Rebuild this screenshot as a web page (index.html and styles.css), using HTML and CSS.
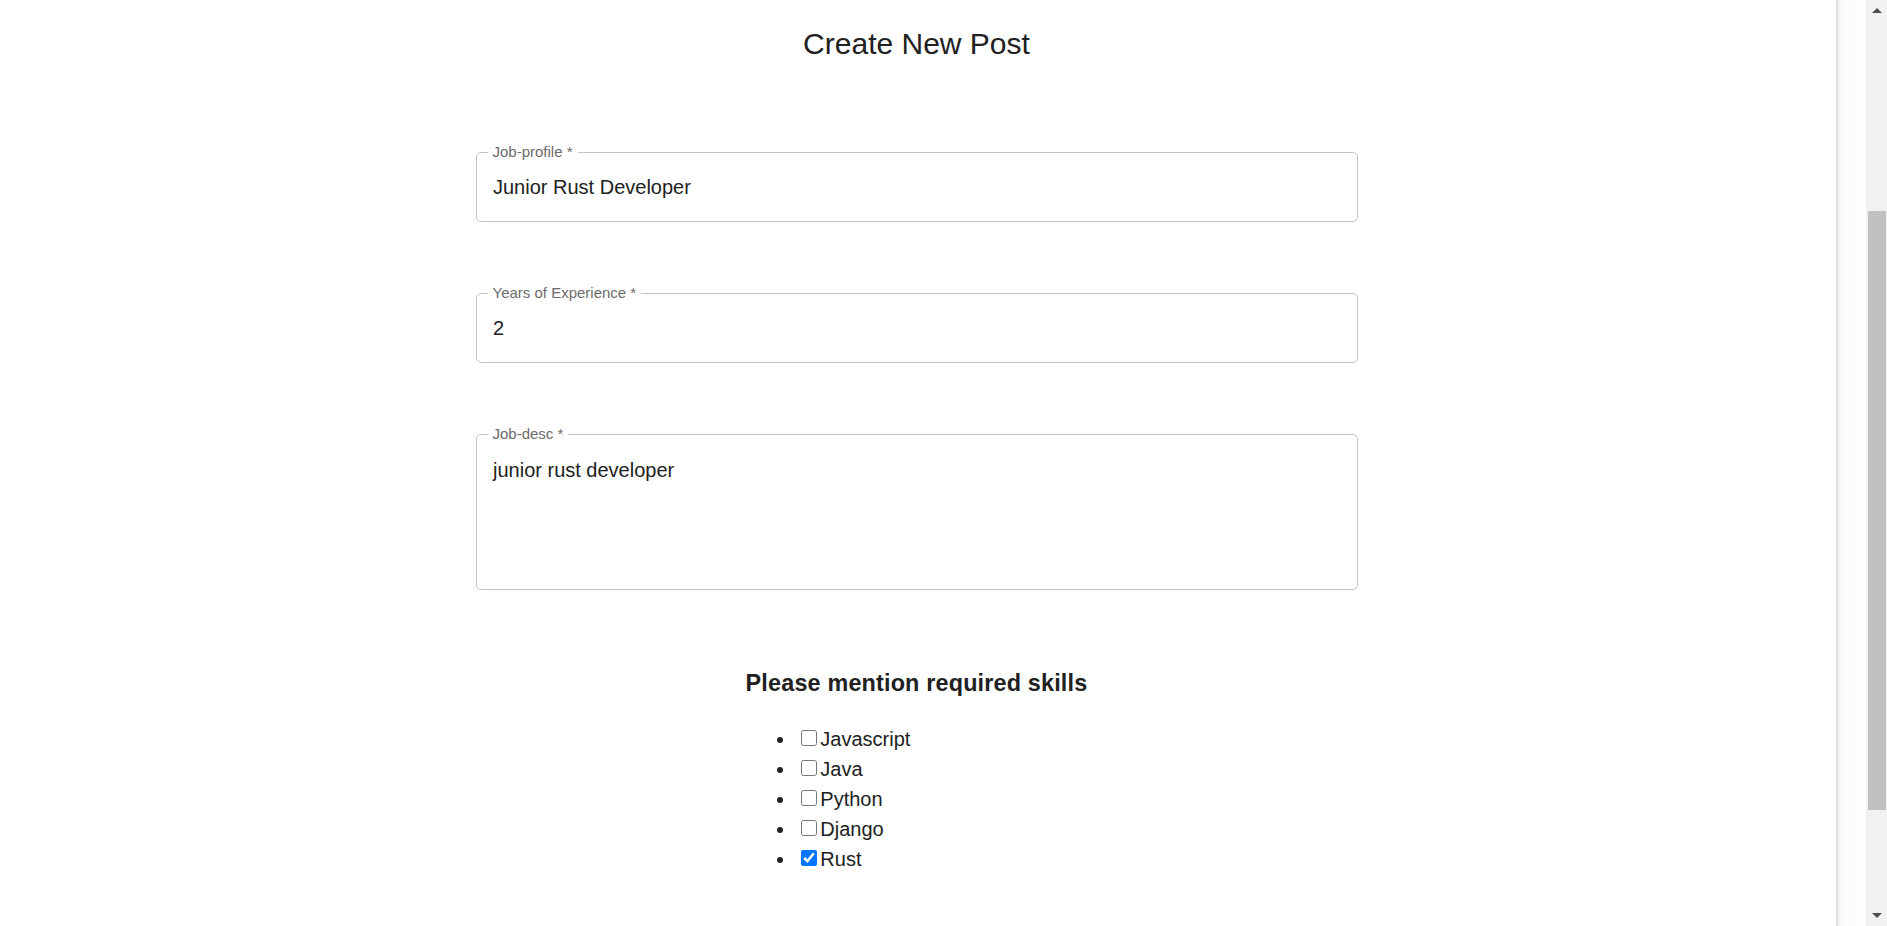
FILE: index.html
```html
<!DOCTYPE html>
<html lang="en">
<head>
<meta charset="utf-8">
<title>Create New Post</title>
<link rel="stylesheet" href="styles.css">
</head>
<body>
  <div class="page">
    <main class="main">
      <h5 class="title">Create New Post</h5>
      <form class="form">
        <div class="field">
          <label class="field-label">Job-profile *</label>
          <input class="field-input" type="text" value="Junior Rust Developer">
        </div>
        <div class="field">
          <label class="field-label">Years of Experience *</label>
          <input class="field-input" type="text" value="2">
        </div>
        <div class="field field-multi">
          <label class="field-label">Job-desc *</label>
          <textarea class="field-textarea" rows="4">junior rust developer</textarea>
        </div>
      </form>
      <section class="skills">
        <h3 class="skills-title">Please mention required skills</h3>
        <ul class="skills-list">
          <li><input class="check" type="checkbox">Javascript</li>
          <li><input class="check" type="checkbox">Java</li>
          <li><input class="check" type="checkbox">Python</li>
          <li><input class="check" type="checkbox">Django</li>
          <li><input class="check" type="checkbox" checked>Rust</li>
        </ul>
      </section>
    </main>
    <div class="side-strip"></div>
    <div class="scrollbar">
      <div class="sb-button"><span class="sb-arrow-up"></span></div>
      <div class="sb-track"><div class="sb-thumb"></div></div>
      <div class="sb-button"><span class="sb-arrow-down"></span></div>
    </div>
  </div>
</body>
</html>
```

FILE: styles.css
```css
html, body {
  margin: 0;
  padding: 0;
  background: #fff;
}

body {
  font-family: "Liberation Sans", Arial, sans-serif;
  font-size: 20px;
  line-height: 1.5;
  color: #212121;
}

.page {
  display: flex;
  height: 926px;
  overflow: hidden;
}

.main {
  flex: 1;
  display: flex;
  flex-direction: column;
  align-items: center;
  min-width: 0;
  padding-right: 3px;
}

.title {
  margin: 24px 0 0;
  font-size: 30px;
  line-height: 40px;
  font-weight: 400;
  color: #212121;
}

.form {
  width: 882px;
  margin-top: 88px;
  display: flex;
  flex-direction: column;
  gap: 71px;
}

.field {
  position: relative;
  height: 70px;
  box-sizing: border-box;
  border: 1px solid #c4c4c4;
  border-radius: 5px;
  display: flex;
}

.field-multi {
  height: 156px;
}

.field-label {
  position: absolute;
  top: -10px;
  left: 11px;
  padding: 0 5px;
  background: #fff;
  font-size: 15px;
  line-height: 18px;
  color: #6b6b6b;
  white-space: nowrap;
}

.field-input {
  flex: 1;
  border: none;
  outline: none;
  background: transparent;
  padding: 0 16.5px;
  margin: 0;
  height: 68px;
  font-family: inherit;
  font-size: 20px;
  color: #212121;
}

.field-textarea {
  flex: 1;
  border: none;
  outline: none;
  resize: none;
  background: transparent;
  margin: 0;
  padding: 20.6px 16.5px;
  font-family: inherit;
  font-size: 20px;
  line-height: 28.75px;
  color: #212121;
  overflow: hidden;
}

.skills {
  margin-top: 76px;
  display: flex;
  flex-direction: column;
}

.skills-title {
  margin: 0;
  font-size: 23.4px;
  line-height: 35px;
  font-weight: 700;
  letter-spacing: 0.17px;
  color: #212121;
}

.skills-list {
  margin: 23px 0 0;
  padding-left: 50px;
  list-style: disc;
  line-height: 30px;
}

.check {
  width: 16px;
  height: 16px;
  margin: 3.75px 3.75px 3.75px 5px;
  vertical-align: baseline;
}

.side-strip {
  width: 30px;
  flex: none;
  background: linear-gradient(to right, #dadada 0, #ececec 2px, #f8f8f8 5px, #fcfcfc 9px, #fdfdfd 100%);
}

.scrollbar {
  width: 21px;
  flex: none;
  background: #f1f1f1;
  display: flex;
  flex-direction: column;
}

.sb-button {
  height: 21px;
  flex: none;
  display: flex;
  align-items: center;
  justify-content: center;
}

.sb-arrow-up {
  width: 0;
  height: 0;
  border-left: 5px solid transparent;
  border-right: 5px solid transparent;
  border-bottom: 5px solid #505050;
}

.sb-arrow-down {
  width: 0;
  height: 0;
  border-left: 5px solid transparent;
  border-right: 5px solid transparent;
  border-top: 5px solid #505050;
}

.sb-track {
  flex: 1;
  padding-top: 190px;
}

.sb-thumb {
  height: 599px;
  margin: 0 1px 0 2px;
  background: #c1c1c1;
}
```
